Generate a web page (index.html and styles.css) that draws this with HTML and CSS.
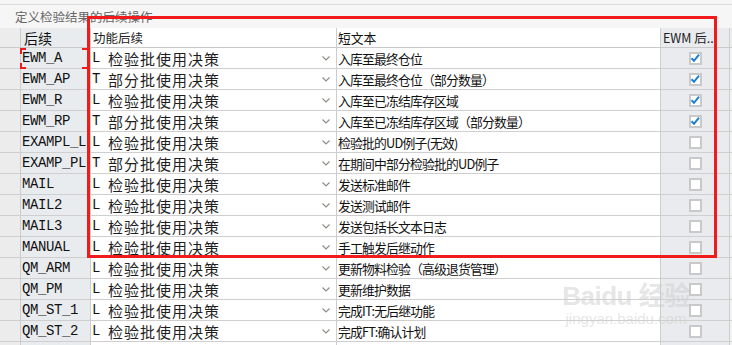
FILE: index.html
```html
<!DOCTYPE html>
<html lang="zh">
<head>
  <meta charset="UTF-8">
  <title>定义检验结果的后续操作</title>
  <link rel="stylesheet" href="styles.css">
</head>
<body>

<div class="screen">
  <div class="title">定义检验结果的后续操作</div>

  <div class="row head">
    <div class="cell sel"></div>
    <div class="cell code">后续</div>
    <div class="cell func">功能后续</div>
    <div class="cell text">短文本</div>
    <div class="cell ewm">EWM 后...</div>
    <div class="cell rest"></div>
  </div>

  <div id="rows"></div>

  <!-- red annotation box -->
  <div class="mark"></div>
  <div class="corner tl"></div>
  <div class="corner bl"></div>
  <div class="corner tr"></div>
  <div class="corner br"></div>

  <div class="watermark">
    <span class="wm-big">Bai<span class="paw">du</span> 经验</span>
    <span class="wm-small">jingyan.baidu.com</span>
  </div>
</div>

<script>
  const data = [
    ['EWM_A', 'L', '检验批使用决策', '入库至最终仓位', true],
    ['EWM_AP', 'T', '部分批使用决策', '入库至最终仓位（部分数量）', true],
    ['EWM_R', 'L', '检验批使用决策', '入库至已冻结库存区域', true],
    ['EWM_RP', 'T', '部分批使用决策', '入库至已冻结库存区域（部分数量）', true],
    ['EXAMPL_L', 'L', '检验批使用决策', '检验批的UD例子(无效)', false],
    ['EXAMP_PL', 'T', '部分批使用决策', '在期间中部分检验批的UD例子', false],
    ['MAIL', 'L', '检验批使用决策', '发送标准邮件', false],
    ['MAIL2', 'L', '检验批使用决策', '发送测试邮件', false],
    ['MAIL3', 'L', '检验批使用决策', '发送包括长文本日志', false],
    ['MANUAL', 'L', '检验批使用决策', '手工触发后继动作', false],
    ['QM_ARM', 'L', '检验批使用决策', '更新物料检验（高级退货管理）', false],
    ['QM_PM', 'L', '检验批使用决策', '更新维护数据', false],
    ['QM_ST_1', 'L', '检验批使用决策', '完成IT:无后继功能', false],
    ['QM_ST_2', 'L', '检验批使用决策', '完成FT:确认计划', false],
    ['', '', '', '', null]
  ];

  const chevron = '<svg class="chev" width="8" height="5" viewBox="0 0 8 5"><path d="M0.5 0.5 L4 4 L7.5 0.5" fill="none" stroke="#8f8a84" stroke-width="1.1"/></svg>';
  const tick = '<svg width="12" height="12" viewBox="0 0 12 12"><path d="M2.5 6.2 L5 8.8 L10 2.6" fill="none" stroke="#1d7fd2" stroke-width="2"/></svg>';

  const list = document.getElementById('rows');
  data.forEach(r => {
    const div = document.createElement('div');
    div.className = 'row';
    const func = r[1] ? `<span class="key">${r[1]} </span><span class="cn">${r[2]}</span>${chevron}` : '';
    const box = r[4] === null ? '' : `<span class="box">${r[4] ? tick : ''}</span>`;
    div.innerHTML = `
      <div class="cell sel"></div>
      <div class="cell code">${r[0]}</div>
      <div class="cell func">${func}</div>
      <div class="cell text">${r[3]}</div>
      <div class="cell ewm">${box}</div>
      <div class="cell rest"></div>
    `;
    list.appendChild(div);
  });
</script>

</body>
</html>
```

FILE: styles.css
```css
* { box-sizing: border-box; margin: 0; padding: 0; }
body {
  background: #ffffff;
  font-family: "Noto Sans CJK SC", sans-serif;
  color: #1a1a1a;
  overflow: hidden;
}
.screen {
  position: relative;
  width: 732px;
  height: 345px;
  overflow: hidden;
  background: #f6f6f6;
}
.title {
  margin-top: 4px;
  border-top: 1px solid #dcdcdc;
  padding: 4px 0 0 15px;
  font-size: 12.5px;
  color: #666;
  line-height: 16px;
  height: 24px;
}
.row {
  display: grid;
  grid-template-columns: 21px 70px 246px 324px 69px 1fr;
  height: 21px;
}
.row.head {
  height: 20px;
  background: #e4e4e4;
}
.cell {
  border-right: 1px solid #cdcdcd;
  border-bottom: 1px solid #cfcfcf;
  display: flex;
  align-items: center;
  white-space: nowrap;
  overflow: hidden;
}
.head .cell {
  font-size: 12.5px;
  color: #222;
  padding-left: 2px;
  border-bottom-color: #c9c9c9;
  background: #e4e4e4;
}
.cell.sel { background: #ececec; }
.cell.code {
  background: #e9ecef;
  font-family: "Liberation Mono", monospace;
  font-size: 14px;
  letter-spacing: -0.4px;
  color: #111;
  padding-left: 1px;
}
.head .cell.code {
  font-family: "Noto Sans CJK SC", sans-serif;
  letter-spacing: 0;
  padding-left: 3px;
}
.cell.func {
  background: #fff;
  padding-left: 1px;
  position: relative;
}
.head .cell.func { padding-left: 2px; }
.func .key {
  font-family: "Liberation Mono", monospace;
  font-size: 14px;
  letter-spacing: -0.4px;
  white-space: pre;
  color: #111;
}
.func .cn {
  font-size: 15px;
  letter-spacing: 1px;
  color: #1e1e1e;
}
.chev {
  position: absolute;
  right: 6px;
  top: 8px;
}
.cell.text {
  background: #fff;
  font-size: 12.8px;
  letter-spacing: -0.8px;
  color: #111;
  padding-left: 1px;
}
.head .cell.text { letter-spacing: 0; }
.cell.ewm {
  background: #e9ebee;
  justify-content: center;
}
.head .cell.ewm {
  justify-content: flex-start;
}
.cell.rest {
  background: #f1f1f1;
  border-right: none;
}
.head .cell.rest { background: #ececec; }
.box {
  width: 13px;
  height: 13px;
  border: 2px solid #c9c9c9;
  background: #fff;
  display: flex;
  align-items: center;
  justify-content: center;
}
.box svg { flex: 0 0 auto; }

/* annotation */
.mark {
  position: absolute;
  left: 87px;
  top: 16px;
  width: 630px;
  height: 242px;
  border: 3px solid #f21b1b;
}
.corner {
  position: absolute;
  width: 6px;
  height: 6px;
  border-color: #f21b1b;
  border-style: solid;
  border-width: 0;
}
.corner.tl { left: 20px; top: 48px; border-left-width: 2px; border-top-width: 2px; }
.corner.bl { left: 20px; top: 63px; border-left-width: 2px; border-bottom-width: 2px; }
.corner.tr { left: 82px; top: 48px; border-top-width: 2px; }
.corner.br { left: 82px; top: 63px; border-bottom-width: 2px; }

.watermark {
  position: absolute;
  left: 556px;
  top: 282px;
  width: 140px;
  color: rgba(205, 205, 205, 0.5);
  font-family: "Liberation Sans", "Noto Sans CJK SC", sans-serif;
  text-align: center;
  white-space: nowrap;
  pointer-events: none;
}
.wm-big {
  display: block;
  font-size: 26px;
  font-weight: bold;
  line-height: 28px;
  letter-spacing: -0.5px;
}
.wm-small {
  display: block;
  font-size: 15px;
  line-height: 18px;
}
```
